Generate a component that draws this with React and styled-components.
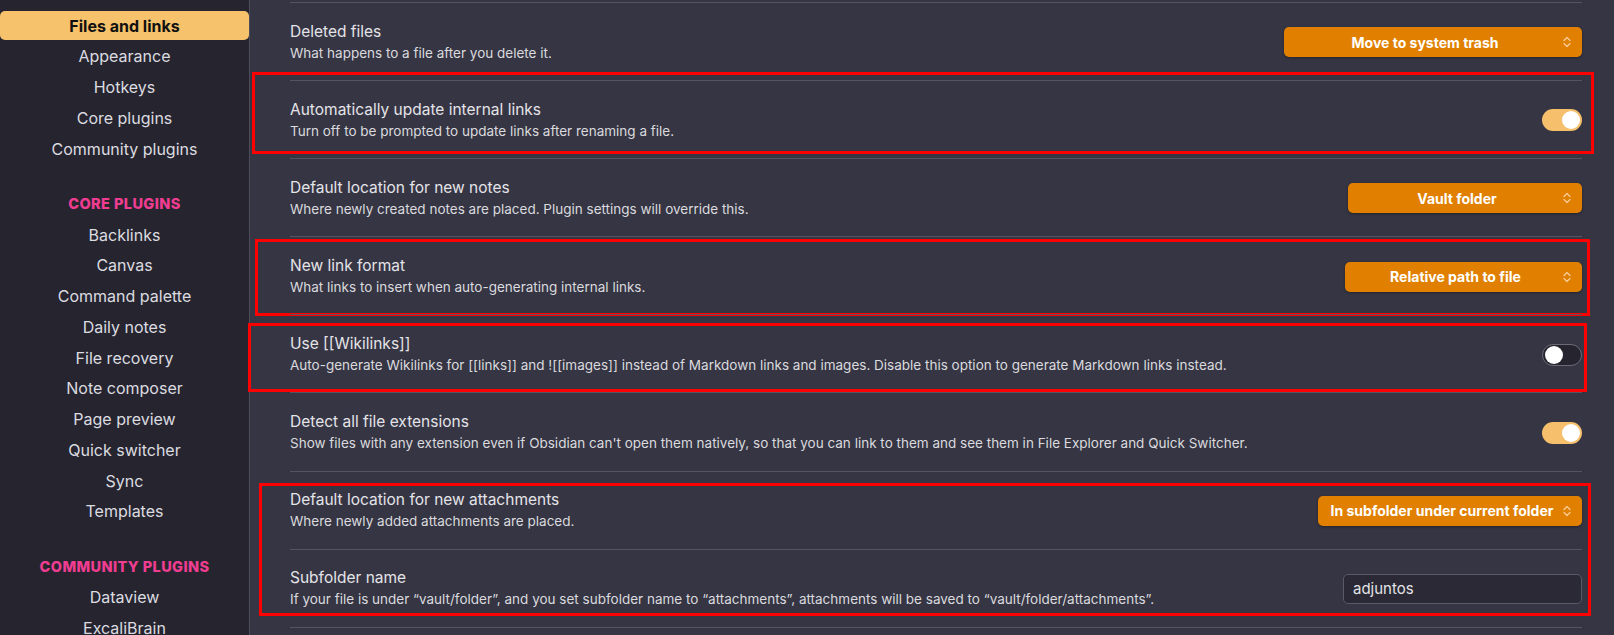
import React from "react";
import styled, { createGlobalStyle } from "styled-components";

const Global = createGlobalStyle`
  html, body { margin: 0; padding: 0; background: #363544; }
  body { font-family: Inter, "Noto Sans", sans-serif; -webkit-font-smoothing: antialiased; }
  * { box-sizing: border-box; }
`;

const Layout = styled.div`
  display: flex;
  width: 1614px;
  height: 635px;
  overflow: hidden;
  background: #363544;
`;

const Sidebar = styled.nav`
  width: 250px;
  flex: none;
  background: #26252f;
  border-right: 1px solid #4d4c59;
  padding-top: 11px;
  display: flex;
  flex-direction: column;
  gap: 1.75px;
`;

const NavItem = styled.div`
  height: 29px;
  flex: none;
  display: flex;
  align-items: center;
  justify-content: center;
  font-size: 16px;
  color: ${(p) => (p.$active ? "#111" : "#dcdce0")};
  font-weight: ${(p) => (p.$active ? 700 : 400)};
  background: ${(p) => (p.$active ? "#f6c26b" : "transparent")};
  border-radius: 5px;
`;

const NavHeader = styled.div`
  height: 29px;
  flex: none;
  margin-top: 24.5px;
  display: flex;
  align-items: center;
  justify-content: center;
  font-size: 14.5px;
  font-weight: 800;
  letter-spacing: 0.4px;
  color: #f03d92;
  text-transform: uppercase;
`;

const Main = styled.main`
  flex: 1;
  padding: 2px 32px 0 40px;
`;

const Group = styled.div`
  position: relative;
`;

const Annotation = styled.div`
  position: absolute;
  top: ${(p) => p.$t}px;
  bottom: ${(p) => p.$b}px;
  left: ${(p) => p.$l}px;
  right: ${(p) => p.$r}px;
  border: 3px solid #ff0000;
  pointer-events: none;
`;

const Row = styled.div`
  display: flex;
  align-items: center;
  justify-content: space-between;
  gap: 24px;
  border-top: 1px solid #55545f;
  padding: 17.8px 0 16.3px;
`;

const Info = styled.div`
  display: flex;
  flex-direction: column;
`;

const Name = styled.div`
  font-size: 15.5px;
  line-height: 22px;
  color: #e4e4e8;
`;

const Desc = styled.div`
  font-size: 13.5px;
  line-height: 21px;
  color: #dadade;
`;

const Select = styled.div`
  position: relative;
  width: ${(p) => p.$w}px;
  height: 30px;
  flex: none;
  background: #e07f00;
  border-radius: 5px;
  box-shadow: 0 1px 3px rgba(0, 0, 0, 0.35);
  color: #fff;
  font-weight: 700;
  font-size: 14px;
  display: flex;
  align-items: center;
  justify-content: center;
  padding: 0 27px 0 11px;
  white-space: nowrap;
`;

const Chevron = styled.svg`
  position: absolute;
  right: 9px;
  top: 8px;
`;

const Toggle = styled.div`
  width: 40px;
  height: 22px;
  flex: none;
  border-radius: 11px;
  background: ${(p) => (p.$on ? "#f5bf6c" : "#26252f")};
  border: ${(p) => (p.$on ? "none" : "1px solid #6b6a76")};
  display: flex;
  align-items: center;
  justify-content: ${(p) => (p.$on ? "flex-end" : "flex-start")};
  padding: 0 2px;
`;

const Knob = styled.div`
  width: 18px;
  height: 18px;
  border-radius: 50%;
  background: #fff;
`;

const TextInput = styled.div`
  width: 239px;
  height: 30px;
  flex: none;
  background: #2a2935;
  border: 1px solid #5a5966;
  border-radius: 5px;
  display: flex;
  align-items: center;
  padding-left: 9px;
  font-size: 15px;
  color: #e4e4e8;
`;

const Dropdown = ({ w, children }) => (
  <Select $w={w}>
    {children}
    <Chevron width="12" height="14" viewBox="0 0 12 14" fill="none">
      <path d="M3 5.5 L6 2.5 L9 5.5" stroke="rgba(255,230,200,0.75)" strokeWidth="1.3" strokeLinecap="round" strokeLinejoin="round" />
      <path d="M3 8.5 L6 11.5 L9 8.5" stroke="rgba(255,230,200,0.75)" strokeWidth="1.3" strokeLinecap="round" strokeLinejoin="round" />
    </Chevron>
  </Select>
);

const Setting = ({ name, desc, children }) => (
  <Row>
    <Info>
      <Name>{name}</Name>
      <Desc>{desc}</Desc>
    </Info>
    {children}
  </Row>
);

const options = ["Appearance", "Hotkeys", "Core plugins", "Community plugins"];
const core = [
  "Backlinks",
  "Canvas",
  "Command palette",
  "Daily notes",
  "File recovery",
  "Note composer",
  "Page preview",
  "Quick switcher",
  "Sync",
  "Templates",
];
const community = ["Dataview", "ExcaliBrain"];

export default function App() {
  return (
    <>
      <Global />
      <Layout>
        <Sidebar>
          <NavItem $active>Files and links</NavItem>
          {options.map((o) => (
            <NavItem key={o}>{o}</NavItem>
          ))}
          <NavHeader>Core plugins</NavHeader>
          {core.map((o) => (
            <NavItem key={o}>{o}</NavItem>
          ))}
          <NavHeader>Community plugins</NavHeader>
          {community.map((o) => (
            <NavItem key={o}>{o}</NavItem>
          ))}
        </Sidebar>
        <Main>
          <Setting name="Deleted files" desc="What happens to a file after you delete it.">
            <Dropdown w={298}>Move to system trash</Dropdown>
          </Setting>
          <Group>
            <Annotation $t={-8} $b={4} $l={-38} $r={-12} />
            <Setting
              name="Automatically update internal links"
              desc="Turn off to be prompted to update links after renaming a file."
            >
              <Toggle $on>
                <Knob />
              </Toggle>
            </Setting>
          </Group>
          <Setting
            name="Default location for new notes"
            desc="Where newly created notes are placed. Plugin settings will override this."
          >
            <Dropdown w={234}>Vault folder</Dropdown>
          </Setting>
          <Group>
            <Annotation $t={3} $b={-2} $l={-35} $r={-8} />
            <Setting
              name="New link format"
              desc="What links to insert when auto-generating internal links."
            >
              <Dropdown w={237}>Relative path to file</Dropdown>
            </Setting>
          </Group>
          <Group>
            <Annotation $t={9} $b={0} $l={-42} $r={-5} />
            <Setting
              name="Use [[Wikilinks]]"
              desc="Auto-generate Wikilinks for [[links]] and ![[images]] instead of Markdown links and images. Disable this option to generate Markdown links instead."
            >
              <Toggle>
                <Knob />
              </Toggle>
            </Setting>
          </Group>
          <Setting
            name="Detect all file extensions"
            desc="Show files with any extension even if Obsidian can't open them natively, so that you can link to them and see them in File Explorer and Quick Switcher."
          >
            <Toggle $on>
              <Knob />
            </Toggle>
          </Setting>
          <Group>
            <Annotation $t={12} $b={11} $l={-31} $r={-9} />
            <Setting
              name="Default location for new attachments"
              desc="Where newly added attachments are placed."
            >
              <Dropdown w={264}>In subfolder under current folder</Dropdown>
            </Setting>
            <Setting
              name="Subfolder name"
              desc="If your file is under “vault/folder”, and you set subfolder name to “attachments”, attachments will be saved to “vault/folder/attachments”."
            >
              <TextInput>adjuntos</TextInput>
            </Setting>
          </Group>
          <Row />
        </Main>
      </Layout>
    </>
  );
}
